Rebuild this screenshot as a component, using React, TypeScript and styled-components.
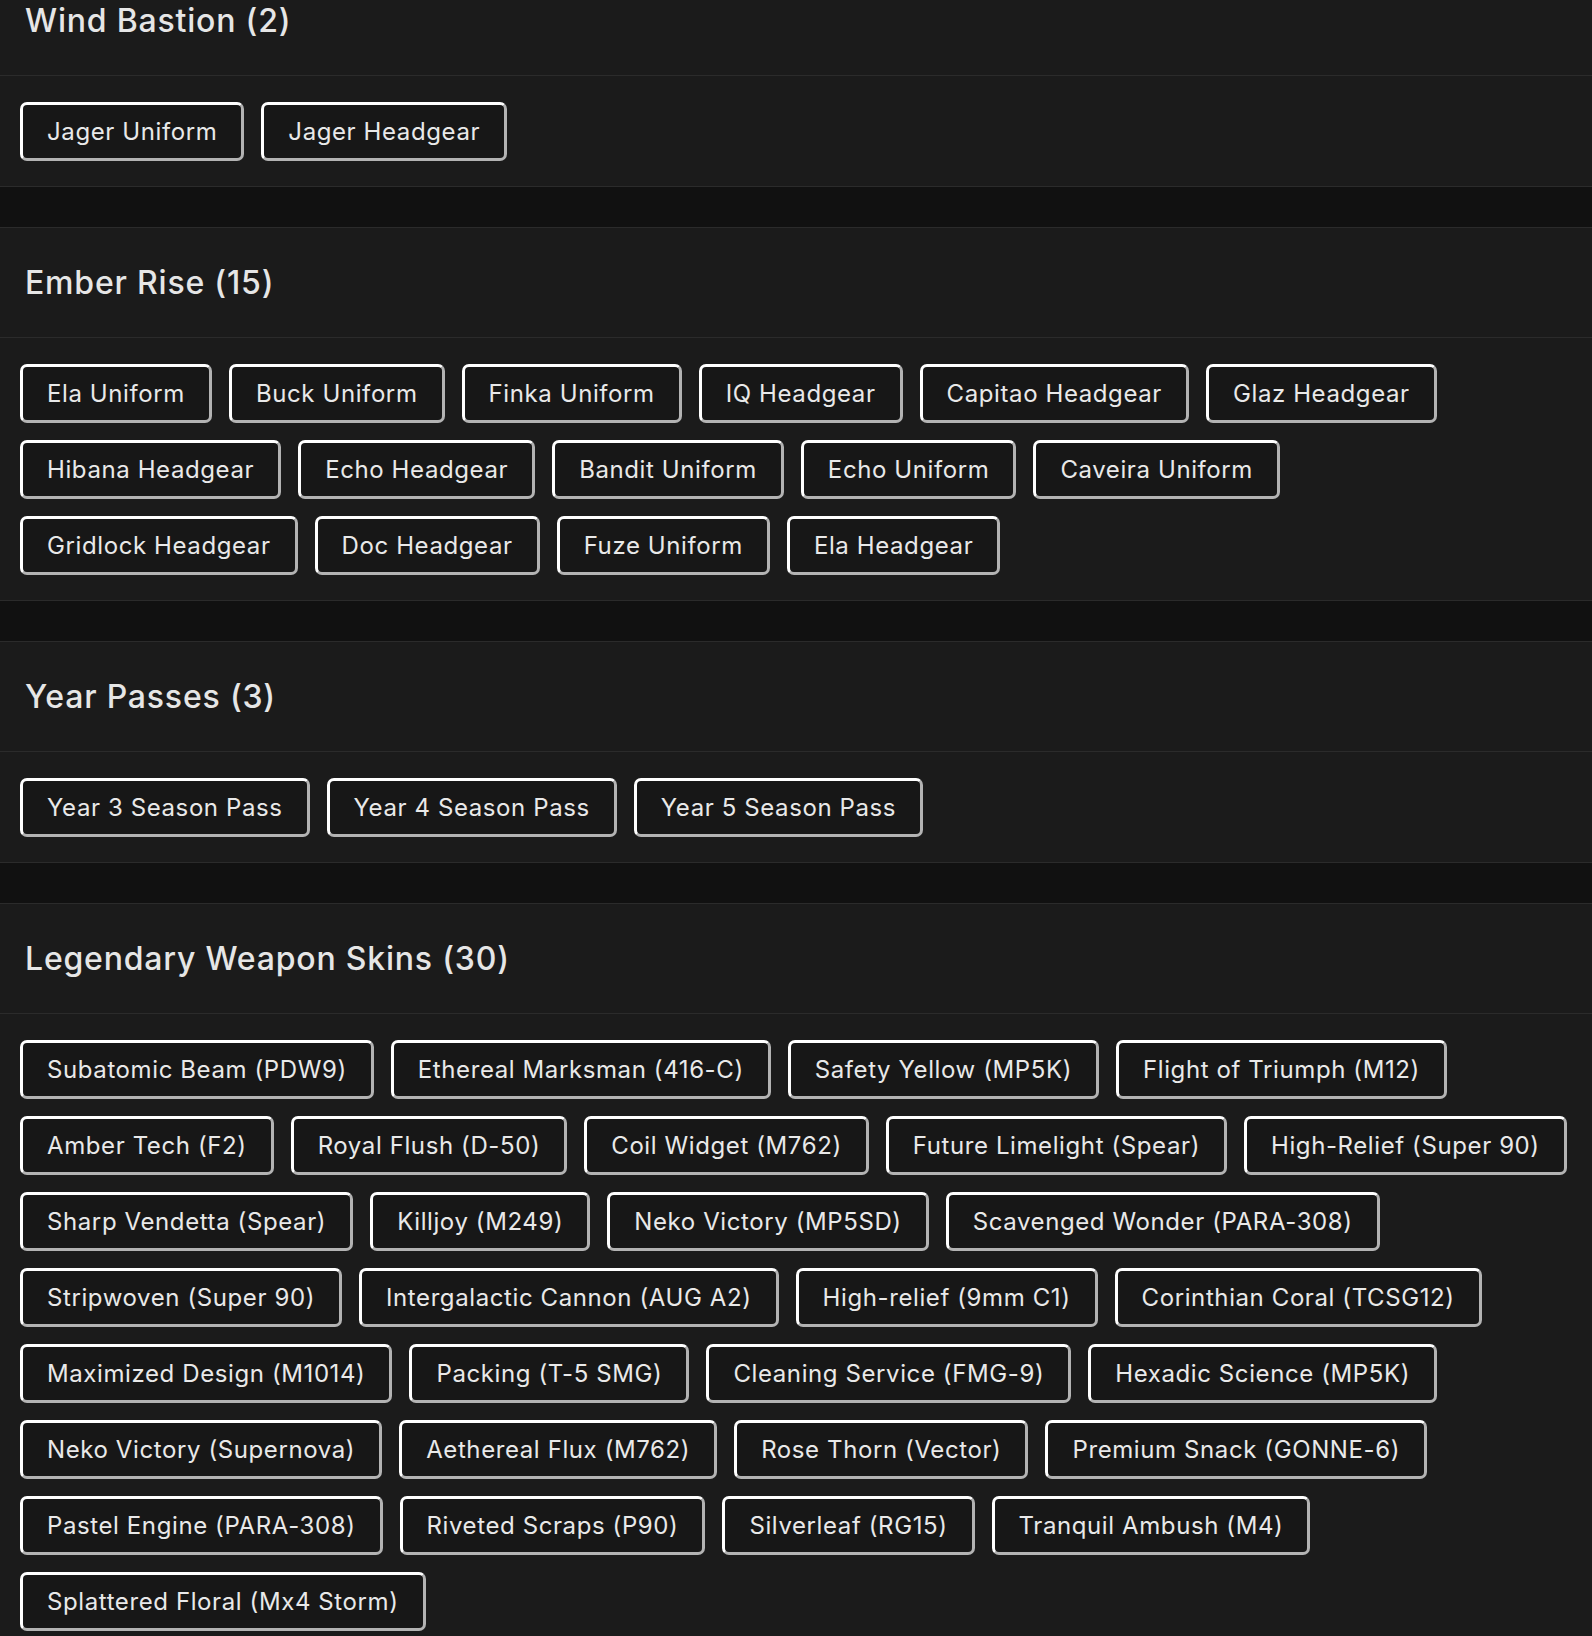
import styled, { createGlobalStyle } from 'styled-components';

const GlobalStyle = createGlobalStyle`
  html, body {
    margin: 0;
    padding: 0;
    background: #111111;
  }
  body {
    font-family: Inter, "Noto Sans", "DejaVu Sans", sans-serif;
    color: #e8e8e8;
  }
`;

type Group = {
  title: string;
  items: string[];
};

const groups: Group[] = [
  { title: 'Wind Bastion', items: ['Jager Uniform', 'Jager Headgear'] },
  {
    title: 'Ember Rise',
    items: [
      'Ela Uniform',
      'Buck Uniform',
      'Finka Uniform',
      'IQ Headgear',
      'Capitao Headgear',
      'Glaz Headgear',
      'Hibana Headgear',
      'Echo Headgear',
      'Bandit Uniform',
      'Echo Uniform',
      'Caveira Uniform',
      'Gridlock Headgear',
      'Doc Headgear',
      'Fuze Uniform',
      'Ela Headgear',
    ],
  },
  {
    title: 'Year Passes',
    items: ['Year 3 Season Pass', 'Year 4 Season Pass', 'Year 5 Season Pass'],
  },
  {
    title: 'Legendary Weapon Skins',
    items: [
      'Subatomic Beam (PDW9)',
      'Ethereal Marksman (416-C)',
      'Safety Yellow (MP5K)',
      'Flight of Triumph (M12)',
      'Amber Tech (F2)',
      'Royal Flush (D-50)',
      'Coil Widget (M762)',
      'Future Limelight (Spear)',
      'High-Relief (Super 90)',
      'Sharp Vendetta (Spear)',
      'Killjoy (M249)',
      'Neko Victory (MP5SD)',
      'Scavenged Wonder (PARA-308)',
      'Stripwoven (Super 90)',
      'Intergalactic Cannon (AUG A2)',
      'High-relief (9mm C1)',
      'Corinthian Coral (TCSG12)',
      'Maximized Design (M1014)',
      'Packing (T-5 SMG)',
      'Cleaning Service (FMG-9)',
      'Hexadic Science (MP5K)',
      'Neko Victory (Supernova)',
      'Aethereal Flux (M762)',
      'Rose Thorn (Vector)',
      'Premium Snack (GONNE-6)',
      'Pastel Engine (PARA-308)',
      'Riveted Scraps (P90)',
      'Silverleaf (RG15)',
      'Tranquil Ambush (M4)',
      'Splattered Floral (Mx4 Storm)',
    ],
  },
];

// the capture starts partway into the first section
const Page = styled.main`
  display: flex;
  flex-direction: column;
  gap: 40px;
  margin-top: -35px;
  background: #111111;
`;

const Section = styled.section`
  background: #1b1b1b;
  border-top: 1px solid #2b2b2b;
  border-bottom: 1px solid #2b2b2b;
`;

const Header = styled.header`
  height: 109px;
  display: flex;
  align-items: center;
  padding: 0 25px;
  border-bottom: 1px solid #2b2b2b;
`;

const Title = styled.h2`
  margin: 0;
  font-size: 32px;
  font-weight: 500;
  color: #e6e6e6;
  letter-spacing: 0.8px;
`;

const List = styled.div`
  display: flex;
  flex-wrap: wrap;
  gap: 17px 17px;
  padding: 26px 20px 25px;
`;

const Chip = styled.button`
  font-family: inherit;
  font-size: 24px;
  line-height: 29px;
  color: #e9e9e9;
  background: #171717;
  padding: 12px 24px;
  border: 3px solid;
  border-color: #ffffff #b3b3b3 #b3b3b3 #ffffff;
  border-radius: 7px;
  letter-spacing: 0.6px;
  cursor: pointer;
`;

function App() {
  return (
    <>
      <GlobalStyle />
      <Page>
        {groups.map((group) => (
          <Section key={group.title}>
            <Header>
              <Title>
                {group.title} ({group.items.length})
              </Title>
            </Header>
            <List>
              {group.items.map((item) => (
                <Chip key={item}>{item}</Chip>
              ))}
            </List>
          </Section>
        ))}
      </Page>
    </>
  );
}

export default App;
